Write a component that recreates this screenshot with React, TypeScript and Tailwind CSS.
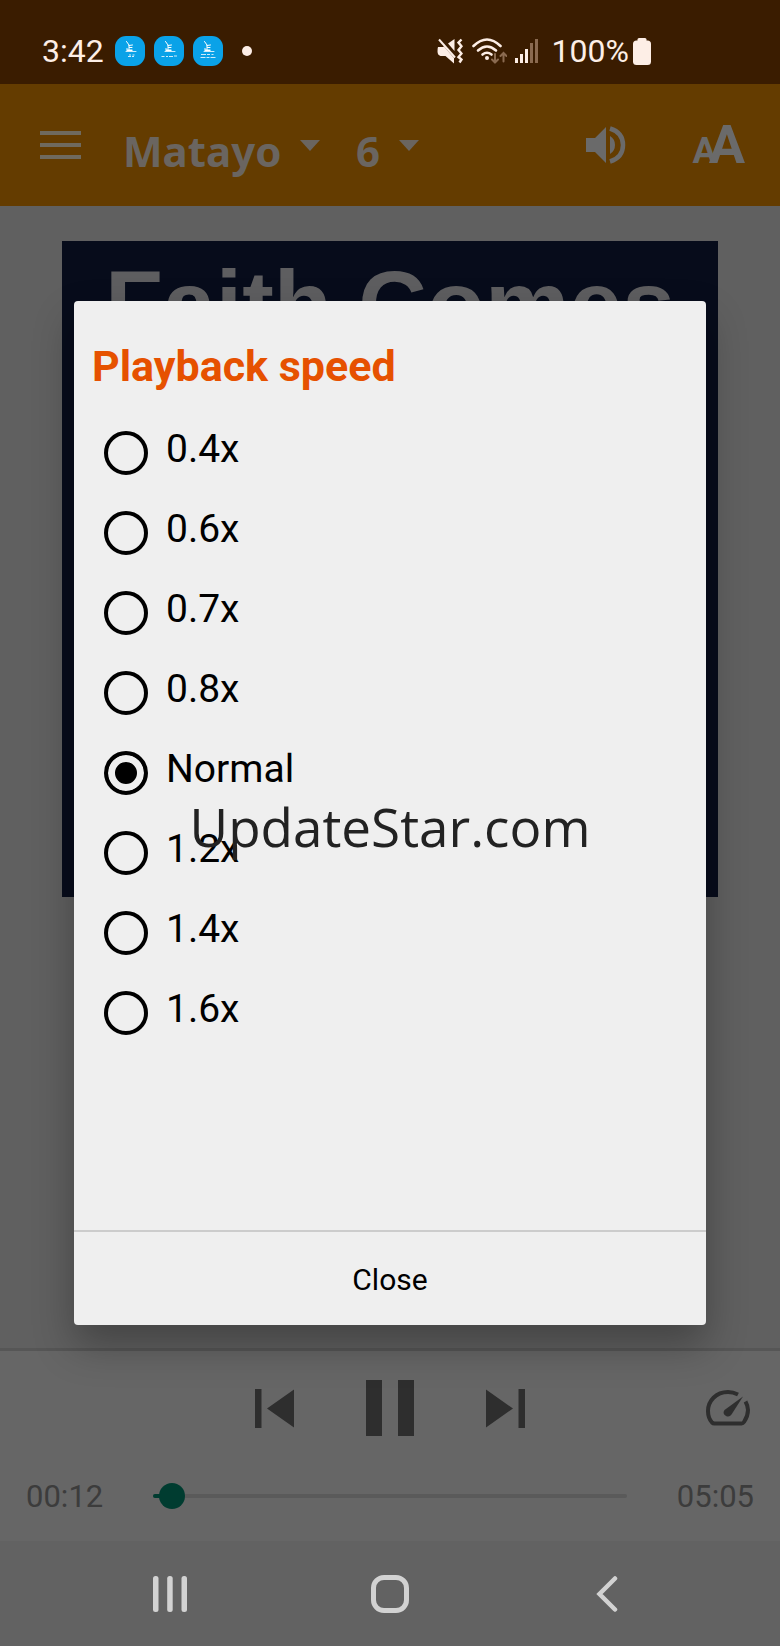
import { useState } from "react";

const speeds = ["0.4x", "0.6x", "0.7x", "0.8x", "Normal", "1.2x", "1.4x", "1.6x"];

const captions = [
  "M14 19h2M13 20.500h3M17.500 19h2M17 20.500h2",
  "M7.500 20.500h3M12 20.500h2M15 20.500h4M20 20h3",
  "M8 18.500h5M14 18.500h3M18.500 18.500h2M7.500 21.500h5M13.500 21.500h3M17.500 21.500h5",
];

function AppBadge({ caption }: { caption: string }) {
  return (
    <svg viewBox="0 0 30 30" className="size-[30px]">
      <rect width="30" height="30" rx="11" fill="#0aa2e8" />
      <g stroke="#fff" fill="none" strokeLinecap="round">
        <path d="M11.500 5.500l2.500 3.500v5M14 9.500l3.500-.5M14.500 11.500h2.500M12 12.500v2" strokeWidth="1" />
        <path d="M11 15.500h10" strokeWidth="0.800" />
        <path d="M12.500 14.200h4.500" strokeWidth="1.400" />
        <path d={caption} strokeWidth="1" opacity="0.8" strokeLinecap="butt" />
      </g>
    </svg>
  );
}

function StatusBar() {
  return (
    <div className="flex h-[84px] items-center justify-between bg-[#3a1c00] pt-[18px] pr-[129px] pl-[42px] text-[32px] leading-none text-[#fdeee6]">
      <div className="flex items-center">
        <span className="mr-[11px]">3:42</span>
        <div className="flex gap-[9px]">
          {captions.map((caption) => (
            <AppBadge key={caption} caption={caption} />
          ))}
        </div>
        <span className="ml-[19px] size-[10px] rounded-full bg-[#fdeee6]" />
      </div>
      <div className="flex items-center">
        {/* muted / vibrate */}
        <svg viewBox="0 0 26 26" className="mr-[9px] h-[26px] w-[26px]" fill="#fdeee6">
          <path d="M1 9h5l1-.5L17 20v5.500L8.500 18H3.500Q.5 17 .5 13.500T1 9z" />
          <path d="M11 5.500L17.500 1v12z" />
          <path d="M2 1.500L18 19.500" stroke="#fdeee6" strokeWidth="2" />
          <path
            d="M24.500 1.500l-3 3 3 3.800-3 3.700 3 3.500-3 3.500 3 2.500-2 3"
            fill="none"
            stroke="#fdeee6"
            strokeWidth="2.400"
          />
        </svg>
        {/* wifi */}
        <svg viewBox="0 0 35 26" className="mr-[7px] h-[26px] w-[35px]" fill="none" strokeLinecap="round">
          <g stroke="#fdeee6" strokeWidth="2.600">
            <path d="M1.500 8Q15 -5 28.500 8" />
            <path d="M6 12.500q9-8 18 0" />
            <path d="M10.500 16.500q4.500-3.500 9 0" />
          </g>
          <circle cx="15" cy="20" r="2" fill="#fdeee6" />
          <path d="M23 16v8.500m-3-3 3 3 3-3M31.500 23.500V15m-3 3 3-3 3 3" stroke="#8a6a50" strokeWidth="2" />
        </svg>
        {/* signal */}
        <svg viewBox="0 0 24 26" className="mr-[14px] h-[26px] w-[24px]">
          <path d="M1 20h3v5H1zM6 16h3v9H6zM11 11h3v14h-3z" fill="#fdeee6" />
          <path d="M16 5h3v20h-3zM21 1h3v24h-3z" fill="#8a6a50" />
        </svg>
        <span className="mr-[4px]">100%</span>
        <svg viewBox="0 0 18 27" className="h-[27px] w-[18px]" fill="#fdeee6">
          <rect x="4.500" width="9" height="6" rx="1.500" />
          <rect y="2.500" width="18" height="24.500" rx="3.500" />
        </svg>
      </div>
    </div>
  );
}

function Picker({ label, value }: { label: string; value: string }) {
  return (
    <label className="flex items-center gap-[18px]">
      <select
        aria-label={label}
        className="appearance-none bg-transparent pt-[12px] font-['Noto_Sans',sans-serif] text-[42px] leading-[52px] font-bold outline-none"
      >
        <option>{value}</option>
      </select>
      <svg viewBox="0 0 20 11" className="h-[11px] w-[20px]" fill="currentColor">
        <path d="M0 0h20L10 11z" />
      </svg>
    </label>
  );
}

function AppBar() {
  return (
    <header className="flex h-[122px] items-center bg-[#643c00] pr-[35px] pl-[40px] text-[#6a6560]">
      <button aria-label="Menu" className="mr-[42px] flex w-[41px] flex-col gap-[8px]">
        <span className="h-[4px] bg-[#6f6a5e]" />
        <span className="h-[4px] bg-[#6f6a5e]" />
        <span className="h-[4px] bg-[#6f6a5e]" />
      </button>
      <div className="flex flex-1 gap-[36px]">
        <Picker label="Book" value="Matayo" />
        <Picker label="Chapter" value="6" />
      </div>
      <button aria-label="Audio" className="mr-[67px]">
        <svg viewBox="0 0 40 38" className="h-[38px] w-[40px]" fill="#6a6a6a">
          <path d="M0 12h9L20 1v36L9 26H0z" />
          <path d="M24 10q5 3 5 9t-5 9z" />
          <path d="M24 2.500q13 4 13 16.500T24 35.500" fill="none" stroke="#6a6a6a" strokeWidth="4.500" />
        </svg>
      </button>
      <button
        aria-label="Text size"
        className="flex items-baseline leading-none font-bold text-[#6a6a6a]"
      >
        <span className="text-[36px]">A</span>
        <span className="-ml-[8px] text-[54px]">A</span>
      </button>
    </header>
  );
}

function Player() {
  const duration = 305;
  const [position, setPosition] = useState(12);
  const minutes = String(Math.floor(position / 60)).padStart(2, "0");
  const seconds = String(position % 60).padStart(2, "0");

  return (
    <section className="border-t-[3px] border-[#565656] bg-[#666666] pb-[14px] text-[#2e2e2e]">
      <div className="grid h-[114px] grid-cols-[1fr_auto_1fr] items-center">
        <div />
        <div className="flex items-center gap-[72px]">
          <button aria-label="Previous">
            <svg viewBox="0 0 39 39" className="size-[39px]" fill="currentColor">
              <path d="M0 0h6.500v39H0zM39 .5v38L12 19.500z" />
            </svg>
          </button>
          <button aria-label="Pause">
            <svg viewBox="0 0 48 56" className="h-[56px] w-[48px]" fill="currentColor">
              <path d="M0 0h16v56H0zM32 0h16v56H32z" />
            </svg>
          </button>
          <button aria-label="Next">
            <svg viewBox="0 0 39 39" className="size-[39px]" fill="currentColor">
              <path d="M32.500 0H39v39h-6.500zM0 .5v38l27-19z" />
            </svg>
          </button>
        </div>
        <button aria-label="Playback speed" className="mr-[30px] justify-self-end">
          <svg viewBox="0 0 44 36" className="h-[36px] w-[44px]">
            <path
              d="M32 4.500Q27 2 22 2C10 2 2 11 2 21q0 7 4 11.500Q7 33.500 8.500 33.500h27q1.500 0 2.500-1.500 4-6 4-12 0-4-2.500-8.500"
              fill="none"
              stroke="currentColor"
              strokeWidth="4"
            />
            <path d="M37 6.500L25.500 24.500q-2 3-5.500 1.500-4-2.500-1.500-6z" fill="currentColor" />
          </svg>
        </button>
      </div>
      <div className="flex h-[62px] items-center px-[26px] text-[31px] leading-none text-[#3c3c3c]">
        <span>
          {minutes}:{seconds}
        </span>
        <div className="relative mx-[50px] flex h-[26px] flex-1 items-center">
          <div className="h-[4px] w-full rounded-full bg-[#5a5a5a]">
            <div
              className="h-full rounded-full bg-[#003c30]"
              style={{ width: `${(position / duration) * 100}%` }}
            />
          </div>
          <input
            type="range"
            aria-label="Position"
            min={0}
            max={duration}
            value={position}
            onChange={(e) => setPosition(Number(e.target.value))}
            className="absolute inset-y-0 -right-[13px] -left-[13px] appearance-none bg-transparent [&::-webkit-slider-thumb]:size-[26px] [&::-webkit-slider-thumb]:appearance-none [&::-webkit-slider-thumb]:rounded-full [&::-webkit-slider-thumb]:bg-[#003c30]"
          />
        </div>
        <span>05:05</span>
      </div>
    </section>
  );
}

function NavBar() {
  return (
    <nav className="grid h-[105px] grid-cols-3 items-center justify-items-center bg-[#626262] px-[60px] text-[#d2d2d2]">
      <button aria-label="Recent apps">
        <svg viewBox="0 0 34 36" className="h-[36px] w-[34px]" fill="currentColor">
          <rect width="5.500" height="36" rx="2.500" />
          <rect x="14.200" width="5.500" height="36" rx="2.500" />
          <rect x="28.500" width="5.500" height="36" rx="2.500" />
        </svg>
      </button>
      <button aria-label="Home" className="size-[38px] rounded-[13px] border-[5px] border-[#d2d2d2]" />
      <button aria-label="Back">
        <svg viewBox="0 0 28 36" className="h-[36px] w-[28px]" fill="none">
          <path
            d="M19 2.500L3.500 18 19 33.500"
            stroke="currentColor"
            strokeWidth="4.500"
            strokeLinecap="round"
          />
        </svg>
      </button>
    </nav>
  );
}

function SpeedDialog({ onClose }: { onClose: () => void }) {
  const [speed, setSpeed] = useState("Normal");

  return (
    <div className="absolute inset-0 flex flex-col px-[74px] pt-[301px] pb-[321px]">
      <div
        role="dialog"
        aria-labelledby="speed-title"
        className="flex flex-1 flex-col rounded-[4px] bg-[#efefef] text-black shadow-[0_20px_40px_rgba(0,0,0,0.3)]"
      >
        <h2
          id="speed-title"
          className="px-[18px] pt-[40px] pb-[22px] text-[43px] leading-[50px] font-bold text-[#e65100]"
        >
          Playback speed
        </h2>
        <div className="flex-1">
          {speeds.map((s) => (
            <label key={s} className="flex h-[80px] items-center gap-[18px] pl-[30px]">
              <input
                type="radio"
                name="speed"
                checked={speed === s}
                onChange={() => setSpeed(s)}
                className="size-[44px] appearance-none rounded-full border-4 border-black checked:bg-black checked:shadow-[inset_0_0_0_7px_#efefef]"
              />
              <span className="pb-[8px] text-[39px] leading-[46px]">{s}</span>
            </label>
          ))}
        </div>
        <button
          onClick={onClose}
          className="h-[95px] border-t-2 border-[#cccccc] pt-[2px] text-[30px] leading-none"
        >
          Close
        </button>
      </div>
    </div>
  );
}

export default function App() {
  const [open, setOpen] = useState(true);

  return (
    <div className="relative flex min-h-screen flex-col bg-[#606060] font-[Roboto,sans-serif]">
      <StatusBar />
      <AppBar />
      <main className="flex-1 px-[62px] pt-[35px]">
        <div className="aspect-square overflow-hidden bg-[#070c1b] pt-[16px] text-center font-['Liberation_Sans',sans-serif] text-[95px] leading-none font-bold whitespace-nowrap text-[#5e5e60]">
          Faith Comes
        </div>
      </main>
      <Player />
      <NavBar />
      {open && <SpeedDialog onClose={() => setOpen(false)} />}
      <div className="pointer-events-none absolute inset-0 flex items-center justify-center pt-[8px] font-['Open_Sans',sans-serif] text-[53px] text-[#222222]">
        UpdateStar.com
      </div>
    </div>
  );
}
